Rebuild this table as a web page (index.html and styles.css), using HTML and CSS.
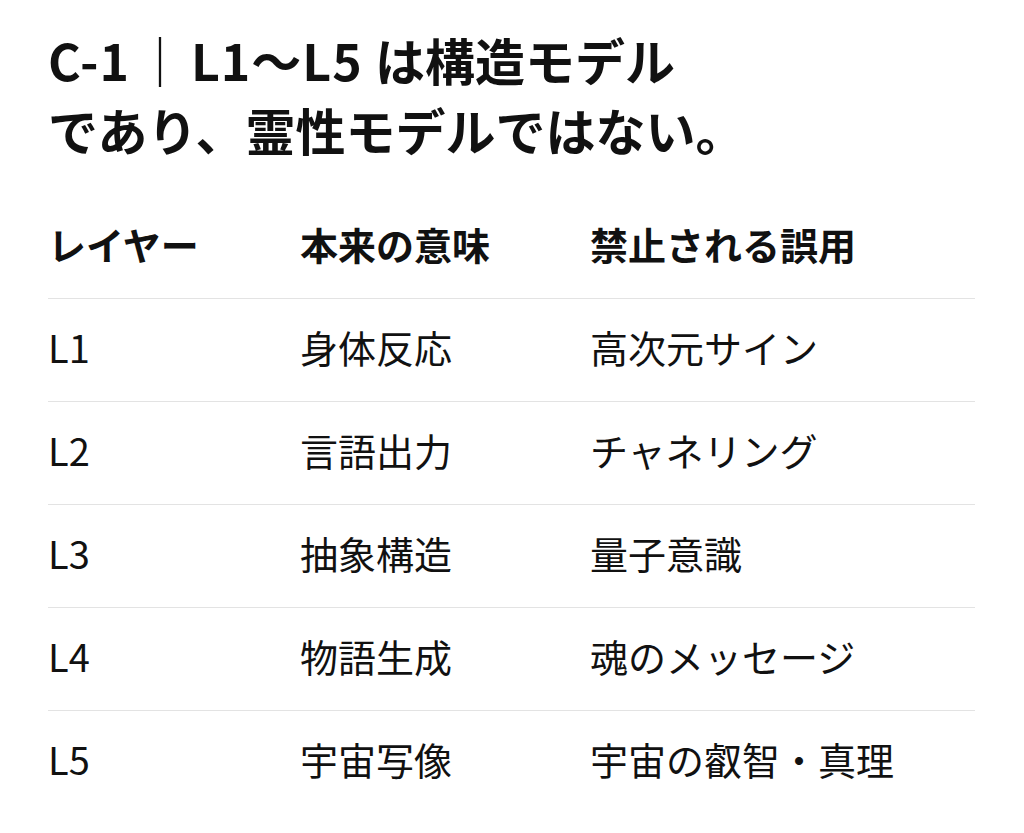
FILE: index.html
```html
<!DOCTYPE html>
<html lang="ja">
<head>
<meta charset="utf-8">
<link rel="stylesheet" href="styles.css">
</head>
<body>
<main class="page">
  <h1 class="title"><span class="lat">C-1<span class="bar">｜</span>L1～L5 </span>は構造モデル<br>であり、霊性モデルではない。</h1>
  <table class="grid">
    <thead>
      <tr><th class="c1">レイヤー</th><th class="c2">本来の意味</th><th>禁止される誤用</th></tr>
    </thead>
    <tbody>
      <tr><td>L1</td><td>身体反応</td><td>高次元サイン</td></tr>
      <tr><td>L2</td><td>言語出力</td><td>チャネリング</td></tr>
      <tr><td>L3</td><td>抽象構造</td><td>量子意識</td></tr>
      <tr><td>L4</td><td>物語生成</td><td>魂のメッセージ</td></tr>
      <tr><td>L5</td><td>宇宙写像</td><td>宇宙の叡智・真理</td></tr>
    </tbody>
  </table>
</main>
</body>
</html>
```
FILE: styles.css
```css
html, body {
  margin: 0;
  padding: 0;
  background: #ffffff;
}
body {
  font-family: "Noto Sans CJK JP", "Liberation Sans", sans-serif;
  color: #111111;
}
.page {
  padding: 24px 49px 0 48px;
}
.title {
  margin: 0;
  font-size: 50px;
  line-height: 70px;
  font-weight: 700;
  letter-spacing: 0;
}
.lat {
  letter-spacing: 1px;
}
.bar {
  margin: 0 5px;
}
.grid {
  margin-top: 32px;
  width: 100%;
  border-collapse: collapse;
  font-size: 38px;
}
.grid th, .grid td {
  text-align: left;
  padding: 0 0 6px 0;
  height: 96px;
  line-height: 50px;
  vertical-align: middle;
}
.grid th {
  font-weight: 700;
}
.grid tbody tr {
  border-top: 1px solid #e3e3e3;
}
.c1 { width: 252px; }
.c2 { width: 290px; }
```
